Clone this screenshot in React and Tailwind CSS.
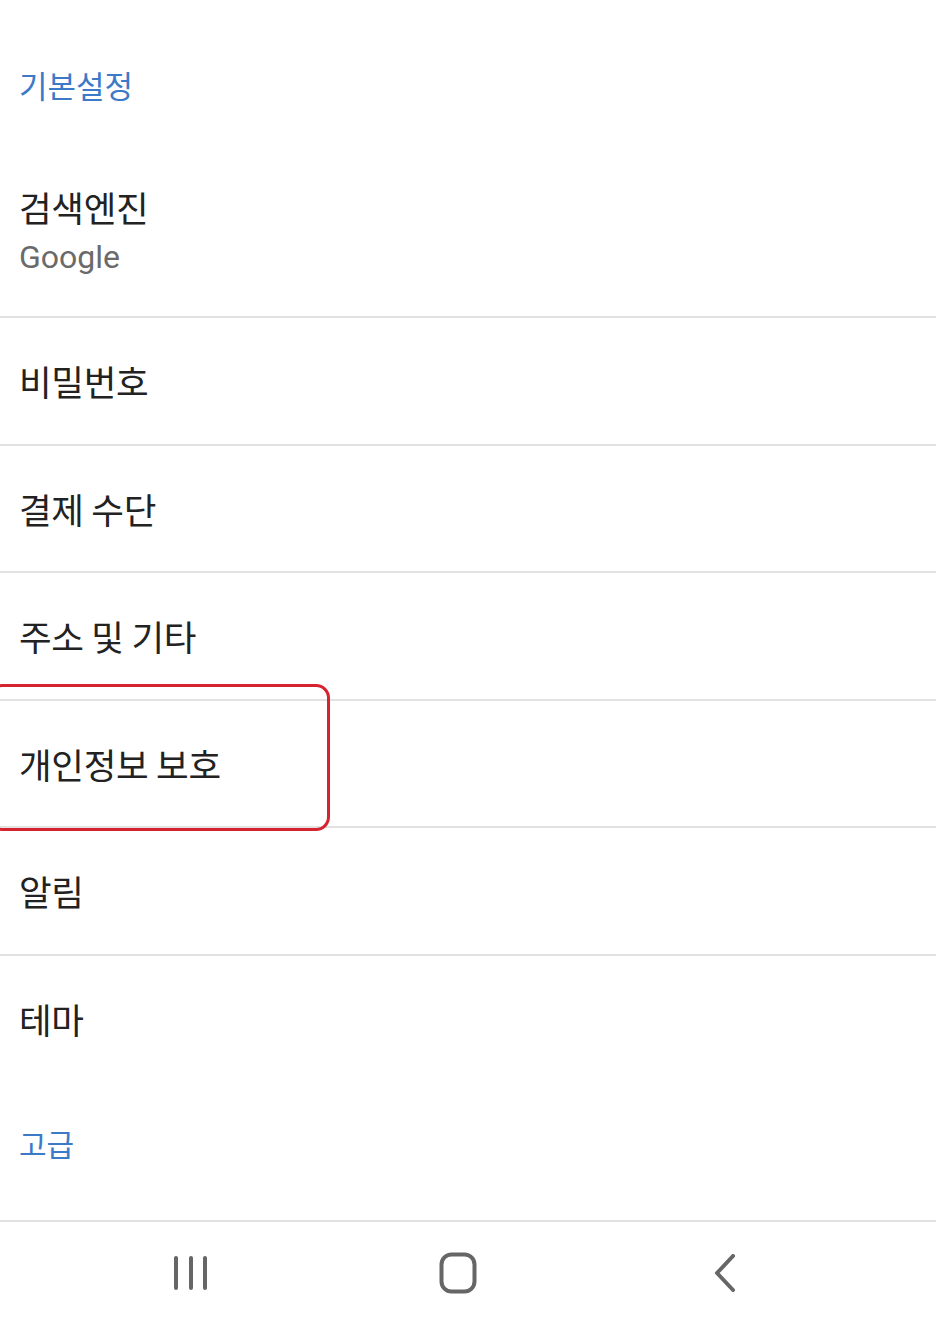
import React from "react";

const KR = { fontFamily: '"Noto Sans CJK KR", "Noto Sans", sans-serif' };

function Row({ label }) {
  return (
    <div className="h-[127.5px] border-t-2 border-[#e2e2e2] flex items-center pl-[19px]">
      <span className="text-[35.5px] leading-none text-[#222222] tracking-[-0.3px]" style={KR}>
        {label}
      </span>
    </div>
  );
}

export default function App() {
  return (
    <div className="relative w-[936px] h-[1331px] bg-white overflow-hidden" style={KR}>
      {/* 기본설정 header */}
      <div className="h-[150px] pl-[19px] pt-[69px]">
        <span className="block text-[31px] leading-none text-[#3c7ac8]">기본설정</span>
      </div>

      {/* 검색엔진 */}
      <div className="h-[166px] pl-[19px] pt-[39px] flex flex-col">
        <span className="text-[35.5px] leading-none text-[#222222] tracking-[-0.3px]">검색엔진</span>
        <span
          className="mt-[16px] text-[32px] leading-none text-[#6a6a6a]"
          style={{ fontFamily: 'Roboto, "Noto Sans", sans-serif' }}
        >
          Google
        </span>
      </div>

      <Row label="비밀번호" />
      <Row label="결제 수단" />
      <Row label="주소 및 기타" />
      <Row label="개인정보 보호" />
      <Row label="알림" />
      <Row label="테마" />

      {/* 고급 header */}
      <div className="h-[139px] pl-[19px] flex items-center">
        <span className="text-[30px] leading-none text-[#3c7ac8] -mt-[16px]">고급</span>
      </div>

      {/* nav bar */}
      <div className="h-[109px] border-t-2 border-[#e2e2e2] flex justify-center items-center pr-[20px] pb-[6px]">
        <div className="w-[267px] flex justify-center">
          <svg width="36" height="36" viewBox="0 0 36 36">
            <g stroke="#666666" strokeWidth="4" strokeLinecap="round">
              <line x1="3" y1="3" x2="3" y2="33" />
              <line x1="18" y1="3" x2="18" y2="33" />
              <line x1="32" y1="3" x2="32" y2="33" />
            </g>
          </svg>
        </div>
        <div className="w-[267px] flex justify-center">
          <svg width="38" height="42" viewBox="0 0 38 42">
            <rect x="2.5" y="2.5" width="33" height="37" rx="10" fill="none" stroke="#666666" strokeWidth="4" />
          </svg>
        </div>
        <div className="w-[267px] flex justify-center">
          <svg width="22" height="38" viewBox="0 0 22 38">
            <polyline points="19,2 3,19 19,36" fill="none" stroke="#666666" strokeWidth="4" strokeLinecap="round" strokeLinejoin="round" />
          </svg>
        </div>
      </div>

      {/* red highlight box */}
      <div className="absolute left-[-12px] top-[684px] w-[342px] h-[147px] border-[3px] border-[#d5232f] rounded-[14px] pointer-events-none" />
    </div>
  );
}
